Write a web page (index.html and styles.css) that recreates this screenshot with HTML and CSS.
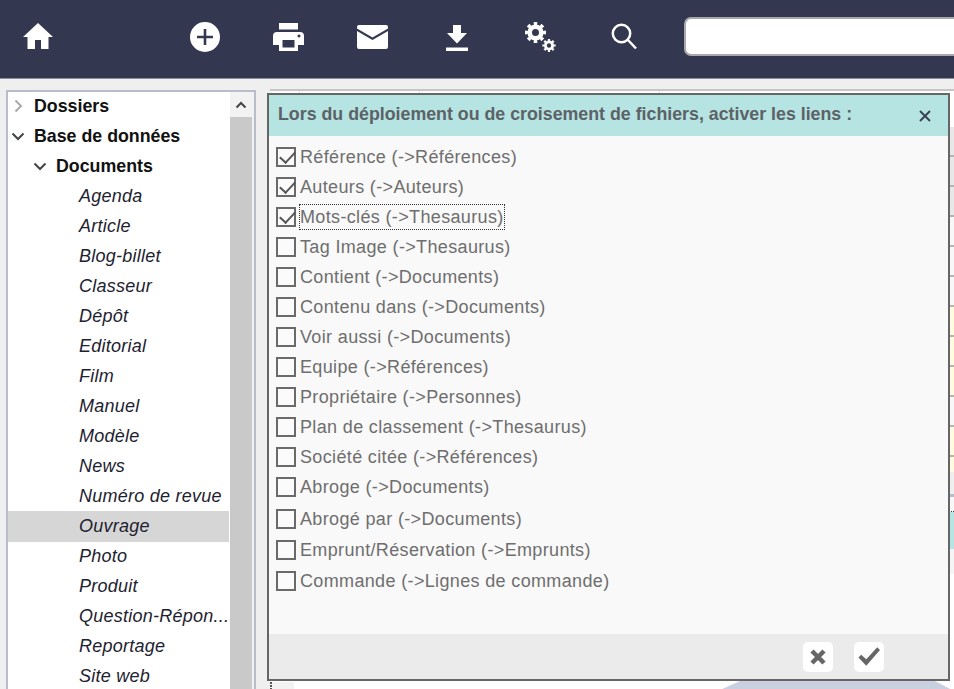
FILE: index.html
```html
<!DOCTYPE html>
<html lang="fr">
<head>
<meta charset="utf-8">
<title>Activer les liens</title>
<link rel="stylesheet" href="styles.css">
</head>
<body>
<header class="topbar">
  <svg class="ic ic-home" viewBox="0 0 30 26"><path d="M15 0 L30 14 H25.500 V26 H18 V17 H12 V26 H4.500 V14 H0 Z"/></svg>
  <svg class="ic ic-add" viewBox="0 0 30 30"><path fill-rule="evenodd" d="M15 0a15 15 0 1 0 0 30a15 15 0 1 0 0-30ZM13.700 7h2.600v6.700H23v2.600h-6.700V23h-2.600v-6.700H7v-2.600h6.700Z"/></svg>
  <svg class="ic ic-print" viewBox="0 0 31 28"><path fill-rule="evenodd" d="M6 0H25V6.500H6ZM4 9H27a4 4 0 0 1 4 4V22H25V28H6V22H0V13a4 4 0 0 1 4-4ZM9.500 17V24.500H21.500V17ZM26 11.500a1.500 1.500 0 1 0 0.010 0Z"/></svg>
  <svg class="ic ic-mail" viewBox="0 0 31 24"><path d="M2 0H29a2 2 0 0 1 2 2V3.500L15.500 12.500 0 3.500V2a2 2 0 0 1 2-2ZM0 6L15.500 15 31 6V22a2 2 0 0 1-2 2H2a2 2 0 0 1-2-2Z"/></svg>
  <svg class="ic ic-down" viewBox="0 0 22 26"><path d="M7 0H15V8H21L11 18.500 1 8H7ZM0 22.500H22V26H0Z"/></svg>
  <svg class="ic ic-gears" viewBox="0 0 31 31">
    <circle class="gear-body" cx="10.500" cy="10.500" r="5.800" stroke-width="4.600"/>
    <circle class="gear-teeth" cx="10.500" cy="10.500" r="9" stroke-width="3" pathLength="16" stroke-dasharray="1 1" stroke-dashoffset="0.500"/>
    <circle class="gear-body" cx="24" cy="23.500" r="3.600" stroke-width="2.800"/>
    <circle class="gear-teeth" cx="24" cy="23.500" r="5.600" stroke-width="2" pathLength="16" stroke-dasharray="1 1" stroke-dashoffset="0.500"/>
  </svg>
  <svg class="ic ic-search" viewBox="0 0 26 27"><circle cx="10.500" cy="10.500" r="8.700"/><path d="M16.500 16.500L25 25.500"/></svg>
  <input class="search" type="text">
</header>

<div class="workspace">
  <nav class="tree">
    <ul class="tree-list">
      <li class="node node-bold"><svg class="chev chev-muted" viewBox="0 0 14 14"><path d="M4.500 1.500L10 7 4.500 12.500"/></svg>Dossiers</li>
      <li class="node node-bold"><svg class="chev" viewBox="0 0 14 14"><path d="M1.500 4.500L7 10 12.500 4.500"/></svg>Base de données</li>
      <li class="node node-bold node-l2"><svg class="chev" viewBox="0 0 14 14"><path d="M1.500 4.500L7 10 12.500 4.500"/></svg>Documents</li>
      <li class="node leaf">Agenda</li>
      <li class="node leaf">Article</li>
      <li class="node leaf">Blog-billet</li>
      <li class="node leaf">Classeur</li>
      <li class="node leaf">Dépôt</li>
      <li class="node leaf">Editorial</li>
      <li class="node leaf">Film</li>
      <li class="node leaf">Manuel</li>
      <li class="node leaf">Modèle</li>
      <li class="node leaf">News</li>
      <li class="node leaf">Numéro de revue</li>
      <li class="node leaf selected">Ouvrage</li>
      <li class="node leaf">Photo</li>
      <li class="node leaf">Produit</li>
      <li class="node leaf">Question-Répon...</li>
      <li class="node leaf">Reportage</li>
      <li class="node leaf">Site web</li>
    </ul>
    <div class="scrollbar">
      <div class="scroll-btn"><svg viewBox="0 0 12 8"><path d="M1.500 6.500L6 2 10.500 6.500"/></svg></div>
    </div>
  </nav>

  <main class="backdrop">
    <div class="sheet">
      <div class="sheet-head"><i class="col col-a"></i><i class="col col-b"></i><i class="col col-c"></i></div>
      <div class="s s-grey"></div>
      <div class="s s-grey"></div>
      <div class="s s-grey"></div>
      <div class="s s-plain"></div>
      <div class="s s-plain"></div>
      <div class="s s-plain"></div>
      <div class="s s-yellow"></div>
      <div class="s s-yellow"></div>
      <div class="s s-yellow"></div>
      <div class="s s-plain"></div>
      <div class="s s-yellow"></div>
      <div class="s s-part"></div>
      <div class="s s-pale"></div>
      <div class="s s-teal"></div>
      <div class="s s-after"></div>
    </div>
    <svg class="blob" viewBox="0 0 232 9"><path d="M20 0H215L232 9H0Z"/></svg>
    <div class="dots"></div>
    <section class="dialog">
      <div class="dialog-head">
        <span class="dialog-title">Lors du déploiement ou de croisement de fichiers, activer les liens :</span>
        <svg class="dialog-close" viewBox="0 0 12 12"><path d="M1 1L11 11M11 1L1 11"/></svg>
      </div>
      <div class="dialog-body">
        <label class="opt"><input type="checkbox" checked><span>Référence (-&gt;Références)</span></label>
        <label class="opt"><input type="checkbox" checked><span>Auteurs (-&gt;Auteurs)</span></label>
        <label class="opt opt-focus"><input type="checkbox" checked><span>Mots-clés (-&gt;Thesaurus)</span></label>
        <label class="opt"><input type="checkbox"><span>Tag Image (-&gt;Thesaurus)</span></label>
        <label class="opt"><input type="checkbox"><span>Contient (-&gt;Documents)</span></label>
        <label class="opt"><input type="checkbox"><span>Contenu dans (-&gt;Documents)</span></label>
        <label class="opt"><input type="checkbox"><span>Voir aussi (-&gt;Documents)</span></label>
        <label class="opt"><input type="checkbox"><span>Equipe (-&gt;Références)</span></label>
        <label class="opt"><input type="checkbox"><span>Propriétaire (-&gt;Personnes)</span></label>
        <label class="opt"><input type="checkbox"><span>Plan de classement (-&gt;Thesaurus)</span></label>
        <label class="opt"><input type="checkbox"><span>Société citée (-&gt;Références)</span></label>
        <label class="opt"><input type="checkbox"><span>Abroge (-&gt;Documents)</span></label>
        <label class="opt opt-gap2"><input type="checkbox"><span>Abrogé par (-&gt;Documents)</span></label>
        <label class="opt opt-gap1"><input type="checkbox"><span>Emprunt/Réservation (-&gt;Emprunts)</span></label>
        <label class="opt opt-gap1"><input type="checkbox"><span>Commande (-&gt;Lignes de commande)</span></label>
      </div>
      <div class="dialog-foot">
        <button class="foot-btn" type="button"><svg viewBox="0 0 18 18"><path class="x" d="M3 3L15 15M15 3L3 15"/></svg></button>
        <button class="foot-btn" type="button"><svg class="tick" viewBox="0 0 24 20"><path d="M0.500 11L3.500 8 9 13 21 0 24 3 9 20Z"/></svg></button>
      </div>
    </section>
  </main>
</div>
</body>
</html>
```
FILE: styles.css
```css
* { box-sizing: border-box; }
html, body { height: 100%; }
body { margin: 0; width: 954px; height: 689px; overflow: hidden; background: #efefef; font-family: "Liberation Sans", Arial, sans-serif; font-size: 18px; }

.topbar { height: 79px; background: #333850; border-bottom: 1px solid #8a8d9c; position: relative; }
.ic { fill: #fff; display: block; position: absolute; }
.ic-home { left: 23px; top: 23px; width: 30px; height: 26px; }
.ic-add { left: 190px; top: 22px; width: 30px; height: 30px; }
.ic-print { left: 273px; top: 23px; width: 31px; height: 28px; }
.ic-mail { left: 357px; top: 25px; width: 31px; height: 24px; }
.ic-down { left: 446px; top: 25px; width: 22px; height: 26px; }
.ic-gears { left: 525px; top: 22px; width: 31px; height: 31px; fill: none; }
.gear-body, .gear-teeth { fill: none; stroke: #fff; }
.ic-search { left: 611px; top: 23px; width: 26px; height: 27px; fill: none; stroke: #fff; stroke-width: 2.500; }
.search { position: absolute; left: 684px; top: 17px; width: 300px; height: 39px; border: 2px solid #a9a9ad; border-radius: 7px; background: #fff; padding: 0; }

.workspace { display: flex; height: 610px; padding: 11px 0 0 6px; }

.tree { width: 250px; height: 600px; background: #fff; border: 2px solid #b9bccb; border-bottom: 0; display: flex; flex: none; }
.tree-list { list-style: none; margin: -1px 0 0; padding: 0; width: 222px; flex: none; }
.node { height: 30px; line-height: 30px; padding-left: 26px; color: #111; position: relative; white-space: nowrap; }
.node-bold { font-weight: 700; font-size: 17.800px; }
.node-l2 { padding-left: 48px; }
.leaf { padding-left: 71px; font-style: italic; color: #1e2230; letter-spacing: .25px; }
.selected { background: #d6d6d6; box-shadow: 0 1px 0 #d6d6d6; margin-right: 1px; }
.chev { position: absolute; left: 3px; top: 8px; width: 14px; height: 14px; fill: none; stroke: #444; stroke-width: 2; }
.chev-muted { stroke: #aaa; }
.node-l2 .chev { left: 25px; }
.scrollbar { width: 24px; background: #c9c9c9; flex: none; border-right: 2px solid #f2f2f2; }
.scroll-btn { height: 25px; background: #f2f2f2; display: flex; align-items: center; justify-content: center; }
.scroll-btn svg { width: 12px; height: 8px; fill: none; stroke: #444; stroke-width: 2; }

.backdrop { position: relative; flex: 1; min-width: 0; }
.sheet { margin: -1px 0 0 14px; height: 600px; background: #fff; border-top: 2px solid #c6c6c6; display: flex; flex-direction: column; }
.sheet-head { height: 36px; display: flex; flex: none; }
.col { display: block; border-right: 1px solid #e2e2e2; height: 4px; }
.col-a { width: 30px; }
.col-b { width: 120px; }
.col-c { width: 240px; }
.s { height: 30px; flex: none; border-bottom: 2px solid #b4b4b4; }
.s-grey { background: #e8e8e8; }
.s-plain { background: #f8f8f8; }
.s-yellow { background: #fefbe1; }
.s-part { height: 40px; background: linear-gradient(#fefbe1 15px, #efefef 15px); border-bottom: 3px solid #b9bccb; }
.s-pale { height: 15px; background: #f8f8f8; border-bottom: 1px dotted #333; }
.s-teal { height: 37px; background: #b5e4e3; border: 0; }
.s-after { height: 25px; background: #f5f5f5; border: 0; }
.blob { position: absolute; left: 464px; top: 591px; width: 232px; height: 9px; fill: #c9d0e0; }
.dots { position: absolute; left: 14px; top: 592px; width: 24px; height: 8px; background: #f2f2f2; border-left: 2px dotted #555; }

.dialog { position: absolute; left: 11px; top: 3px; width: 683px; height: 588px; border: 2px solid #666; background: #f9f9f9; display: flex; flex-direction: column; }
.dialog-head { height: 41px; background: #b5e4e3; display: flex; align-items: center; justify-content: space-between; padding: 0 17px 2px 9px; flex: none; }
.dialog-title { font-weight: 700; font-size: 17.800px; color: #5d6266; }
.dialog-close { width: 12px; height: 12px; fill: none; stroke: #3c4454; stroke-width: 2; margin-top: 3px; }
.dialog-body { flex: 1; padding: 6px 0 0 7px; }
.opt { display: flex; align-items: center; height: 30px; color: #6e6e6e; letter-spacing: .35px; }
.opt-gap2 { margin-top: 2px; }
.opt-gap1 { margin-top: 1px; }
.opt input { appearance: none; width: 20px; height: 20px; margin: 0 4px 0 0; border: 2px solid #6a6a6a; background: #fbfbfb; flex: none; position: relative; }
.opt input:checked::after { content: ""; position: absolute; left: 1.500px; top: 1.500px; width: 13px; height: 7px; border: solid #555; border-width: 0 0 2px 2px; transform: rotate(-47deg); }
.opt-focus span { line-height: 24px; outline: 1px dotted #333; }
.dialog-foot { height: 45px; background: #ebebeb; display: flex; justify-content: flex-end; align-items: center; gap: 21px; padding-right: 64px; flex: none; }
.foot-btn { width: 30px; height: 30px; border: 0; border-radius: 5px; background: #fff; padding: 0; display: flex; align-items: center; justify-content: center; }
.foot-btn svg { width: 18px; height: 18px; fill: none; stroke: #666; }
.foot-btn .x { stroke-width: 4.500; }
.foot-btn .tick { width: 22px; height: 19px; fill: #666; stroke: none; }
```
